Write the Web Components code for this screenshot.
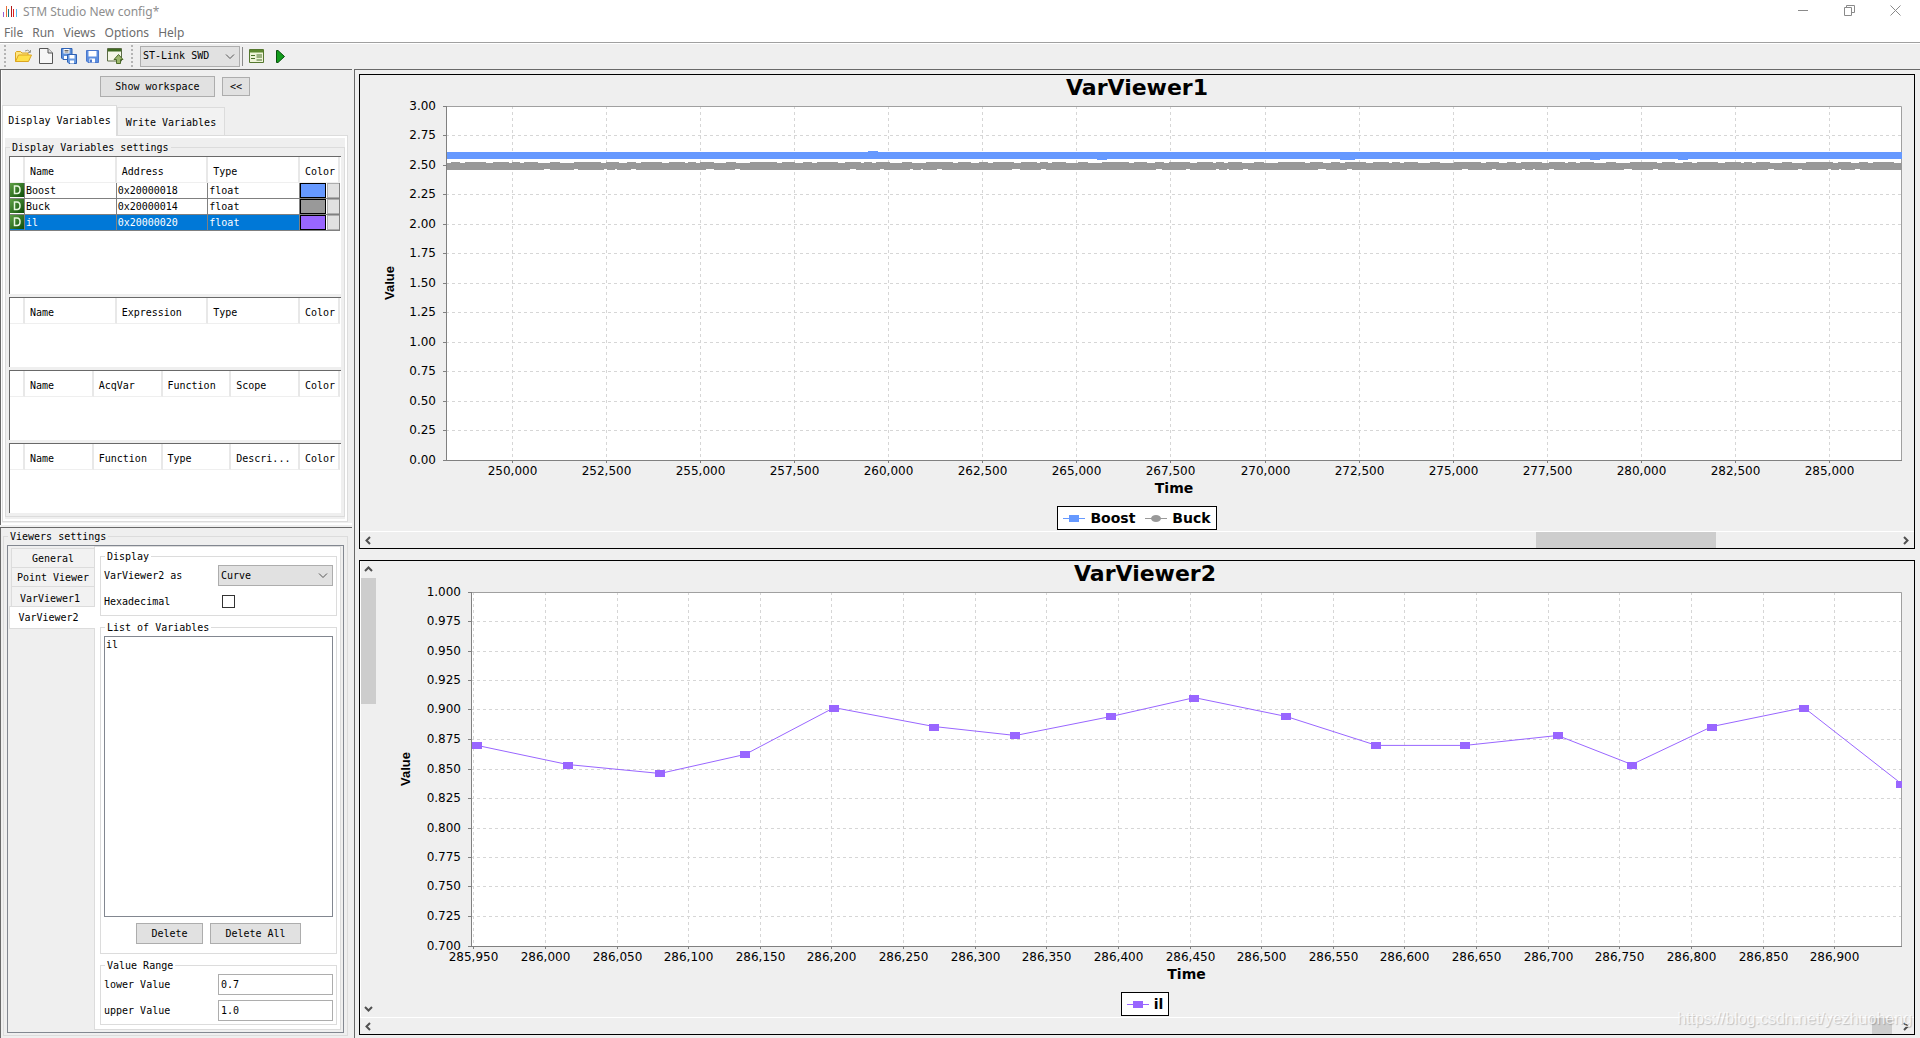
<!DOCTYPE html>
<html lang="en">
<head>
<meta charset="utf-8">
<title>STM Studio New config*</title>
<style>
html,body{margin:0;height:100%}
body{background:#efefef;color:#000;font:10px/14px "DejaVu Sans Mono","Liberation Mono",monospace;overflow:hidden}
</style>
</head>
<body>
<stm-studio></stm-studio>
<script>
const define=(name,html,setup)=>{
  const t=document.createElement('template');
  t.innerHTML='<style>*{box-sizing:border-box}button,input,select,textarea{font:inherit;color:inherit;margin:0;border-radius:0}</style>'+html;
  customElements.define(name,class extends HTMLElement{
    connectedCallback(){
      if(this.shadowRoot)return;
      this.attachShadow({mode:'open'}).append(t.content.cloneNode(true));
      if(setup)setup.call(this,this.shadowRoot);
    }
  });
};

/* ---------- window frame ---------- */
define('stm-titlebar',`
<style>
:host{display:flex;align-items:center;height:23px;background:#fff;color:#8e8e8e;font:12px/16px "Noto Sans",sans-serif;padding:0 2px 0 3px}
.t{flex:1;margin-left:6px}
button{width:46px;height:20px;border:0;background:none;padding:0 0 2px;display:grid;place-items:center}
</style>
<svg width="14" height="13" viewBox="0 0 14 13" aria-hidden="true"><g fill="none" stroke-width="1">
<path d="M.5 7v5" stroke="#9a5fd0"/><path d="M3.500 1v11" stroke="#e8703a"/><path d="M5.500 4v8" stroke="#117a86"/><path d="M8.500 1v11" stroke="#b01818"/><path d="M10.500 4v8" stroke="#e02020"/><path d="M13.500 4v8" stroke="#5ab8ee"/></g></svg>
<span class="t"><slot></slot></span>
<button aria-label="Minimize"><svg width="11" height="11"><path d="M0 5.500h10" stroke="#8a8a8a"/></svg></button>
<button aria-label="Restore"><svg width="11" height="11" fill="none" stroke="#8a8a8a"><path d="M.5 2.500h7v8h-7zM2.500 2.500V.5h8v7h-3"/></svg></button>
<button aria-label="Close"><svg width="11" height="11"><path d="M.5.5l10 10M10.500.5l-10 10" stroke="#8a8a8a"/></svg></button>`);

define('stm-menubar',`
<style>
:host{display:flex;gap:9px;height:19px;background:#fff;color:#6c6c6c;font:12px/19px "Noto Sans",sans-serif;padding-left:4px}
a{color:inherit;text-decoration:none}
</style>
<a href="#file">File</a><a href="#run">Run</a><a href="#views">Views</a><a href="#options">Options</a><a href="#help">Help</a>`);

define('stm-toolbar',`
<style>
:host{display:flex;align-items:center;height:27px;border-top:1px solid #a0a0a0;box-shadow:inset 0 1px #fff;padding:0 0 0 4px}
.grip{width:2px;height:22px;background:repeating-linear-gradient(#b4b4b4 0 2px,#efefef 2px 4px)}
button{border:0;background:none;padding:0;height:20px;display:grid;place-items:center}
.icons{display:flex;gap:7px;margin:0 8px 0 9px}
.icons button{width:16px}
.sep{width:1px;height:19px;background:#8a8a8a;margin:0 6px 0 2px}
stm-select{width:100px;margin-left:7px}
.run{margin-left:12px}
</style>
<span class="grip"></span>
<span class="icons">
<button aria-label="Open"><svg width="17" height="14" viewBox="0 0 17 14"><path d="M.5 12.500V3.500l1-1h4l1.500 1.500h6v2" fill="#ffe680" stroke="#dba520"/><path d="M.5 12.500L3.500 6h13l-3 6.500z" fill="#ffe04a" stroke="#dba520"/><path d="M10 2q3-2 5 .8M15.500 1v2.500H13" fill="none" stroke="#9a9a90"/></svg></button>
<button aria-label="New"><svg width="14" height="16" viewBox="0 0 14 16"><path d="M.5.500h8.500l4.500 4.500v10.500h-13z" fill="#f6f6f6" stroke="#555"/><path d="M9 .5V5h4.500" fill="#ddd" stroke="#555"/></svg></button>
<button aria-label="Save all"><svg width="16" height="16" viewBox="0 0 16 16"><path d="M.5.500h10.500v11H2L.5 10z" fill="#5d8fd8" stroke="#2f62b5"/><path d="M2.500 1h6v4.500h-6zM3 8h5v3H3z" fill="#fff"/><path d="M3.500 2.500h4M3.500 4h4" stroke="#444" stroke-width=".8"/><path d="M6.500 6.500h9v9H8L6.500 14z" fill="#6a9be0" stroke="#2f62b5"/><path d="M8.500 7h5v3.500h-5zM9 12.500h4v3H9z" fill="#fff"/></svg></button>
<button aria-label="Save"><svg width="13" height="13" viewBox="0 0 13 13"><path d="M.5.500h12v12h-10.500L.5 11z" fill="#5d8fe0" stroke="#4a77cc"/><path d="M2.500 1h8v5.500h-8zM3.500 8.500h5.500v4H3.500z" fill="#fff"/><path d="M4 9.500h2v3H4z" fill="#4a77cc"/></svg></button>
<button aria-label="Export"><svg width="17" height="16" viewBox="0 0 17 16"><path d="M.5.500h14v12.500h-14z" fill="#f4f7e6" stroke="#5a6b45"/><path d="M1 1h13v2.500H1z" fill="#3f6b20"/><path d="M11.500 6.500l4.500 5h-2.500v4h-4v-4H7z" fill="#9db86d" stroke="#4c6b2a"/></svg></button>
</span>
<span class="grip"></span>
<stm-select label="Connection" value="ST-Link SWD"></stm-select>
<span class="sep"></span>
<button aria-label="Acquisition settings"><svg width="15" height="14" viewBox="0 0 15 14"><path d="M.5.500h14v13H.5z" fill="#eef3d8" stroke="#55782f"/><path d="M1 1h13v2.500H1z" fill="#5f8a32"/><path d="M2 6.500h4M2 9.500h4M7.500 6h5.500M7.500 8h5.500M7.500 11h5.500" stroke="#48702a"/></svg></button>
<button class="run" aria-label="Run"><svg width="9" height="13" viewBox="0 0 9 13"><path d="M.5.500h1.500l6.500 6-6.500 6H.5z" fill="#129c1c" stroke="#064f0b"/></svg></button>`);

/* ---------- controls ---------- */
define('stm-button',`
<style>
:host{display:block}
button{display:block;width:100%;height:var(--h,21px);border:1px solid #adadad;background:#e1e1e1;padding:1px 0 0;line-height:14px}
</style><button type="button"><slot></slot></button>`);

define('stm-select',`
<style>
:host{display:block;position:relative}
select{display:block;appearance:none;width:100%;height:21px;border:1px solid #adadad;background:#e1e1e1;padding:0 20px 0 2px}
svg{position:absolute;right:5px;top:8px;pointer-events:none}
</style><select id="s"><option></option></select>
<svg width="10" height="6" fill="none" stroke="#555"><path d="M1 .5l4 4 4-4"/></svg>`,
function(r){r.querySelector('select').setAttribute('aria-label',this.getAttribute('label'));r.querySelector('option').textContent=this.getAttribute('value')});

define('stm-field',`
<style>
:host{display:grid;grid-template-columns:1fr 115px;align-items:center;height:21px}
input[type=text]{width:115px;height:21px;border:1px solid #adadad;background:#fff;padding:0 2px;outline:0}
input[type=checkbox]{appearance:none;width:13px;height:13px;border:1px solid #333;background:#fff;margin-left:4px}
stm-select{width:115px}
</style><label for="c"></label>`,
function(r){
  const kind=this.getAttribute('kind'),v=this.getAttribute('value')||'',l=r.querySelector('label');
  l.textContent=this.getAttribute('label');
  let c;
  if(kind==='select'){c=document.createElement('stm-select');c.setAttribute('label',l.textContent);c.setAttribute('value',v)}
  else{c=document.createElement('input');c.type=kind;if(kind==='text')c.value=v}
  c.id='c';r.append(c);
});

define('stm-group',`
<style>
:host{display:flex;flex-direction:column}
fieldset{flex:1;min-width:0;margin:0;border:1px solid #dcdcdc;padding:2px 3px;display:flex;flex-direction:column}
legend{padding:0 2px;margin-left:1px;height:14px;line-height:15px}
</style><fieldset><legend></legend><slot></slot></fieldset>`,
function(r){r.querySelector('legend').textContent=this.getAttribute('label')});

define('stm-table',`
<style>
:host{display:block;background:#fff;border:solid #696969;border-width:1px 0 0 1px}
table{border-collapse:separate;border-spacing:0;table-layout:fixed;width:calc(100% - 1px)}
th{height:26px;padding:4px 0 0 5px;text-align:left;font-weight:400;border-right:2px solid #e8e8e8;border-bottom:1px solid #efefef;white-space:nowrap;overflow:hidden}
td{height:16px;padding:1px 0 0 1px;border:solid #808080;border-width:0 1px 1px 0;line-height:14px}
td:nth-child(1),td:last-child{padding:0}
tr.sel td{background:#0078d7;color:#fff}
svg{display:block}
.c{display:flex;height:15px}
.c i{flex:0 0 26px;border:1px solid #000}
.c button{flex:1;min-width:0;padding:0;border:1px solid #adadad;border-right:0;background:#e1e1e1;margin-left:1px}
tr.sel td:last-child{background:#fff}
</style><table><thead><tr></tr></thead><tbody></tbody></table>`,
function(r){
  const cols=this.getAttribute('cols').split(','),head=r.querySelector('thead tr');
  [''].concat(cols).forEach((c,i)=>{
    const th=document.createElement('th');th.scope='col';th.textContent=c;
    if(i===0)th.style.width='15px';if(i===cols.length)th.style.width='40px';
    head.append(th);
  });
  for(const row of JSON.parse(this.getAttribute('rows')||'[]')){
    const tr=document.createElement('tr');
    if(row.selected)tr.className='sel';
    tr.innerHTML=`<td><svg width="14" height="15" role="img" aria-label="Display"><defs><linearGradient id="g" x2="1" y2="1"><stop stop-color="#5fa045"/><stop offset="1" stop-color="#0c4d08"/></linearGradient></defs><rect width="14" height="14" fill="url(#g)"/><path d="M4.500 3v7.500h2.500q3 0 3-3.750t-3-3.750z" fill="none" stroke="#e8f8e0" stroke-width="1.500"/></svg></td>`+
      row.cells.map(c=>`<td>${c}</td>`).join('')+
      `<td><div class="c"><i style="background:${row.color}"></i><button aria-label="Pick color"></button></div></td>`;
    r.querySelector('tbody').append(tr);
  }
});

define('stm-scrollbar',`
<style>
:host{display:flex;background:#efefef;height:17px;border-top:1px solid #fff}
:host([vertical]){flex-direction:column;width:16px;height:auto;border:0;border-left:1px solid #fff}
button{border:0;background:none;padding:0;flex:0 0 17px;display:grid;place-items:center}
.track{flex:1;display:flex;flex-direction:inherit}
.b{background:#cdcdcd}
</style><button aria-label="Back"><svg width="9" height="9" fill="none" stroke="#505050" stroke-width="2"><path/></svg></button>
<span class="track"><span class="a"></span><span class="b"></span><span class="z"></span></span>
<button aria-label="Forward"><svg width="9" height="9" fill="none" stroke="#505050" stroke-width="2"><path/></svg></button>`,
function(r){
  const v=this.hasAttribute('vertical'),p=r.querySelectorAll('path');
  p[0].setAttribute('d',v?'M1 6l3.500-3.500L8 6':'M6 1L2.500 4.500 6 8');
  p[1].setAttribute('d',v?'M1 3l3.500 3.500L8 3':'M3 1l3.500 3.500L3 8');
  this.getAttribute('parts').split(',').forEach((n,i)=>r.querySelector(['.a','.b','.z'][i]).style.flex=n+' 0 0');
});

/* ---------- chart ---------- */
define('stm-chart',`
<style>
:host{display:flex;flex-direction:column;flex:1;min-height:0;border:1px solid #000;background:#efefef}
.row{flex:1;display:flex;min-height:0}
.main{flex:1;min-width:0;display:flex;flex-direction:column;align-items:center}
h2{margin:0;padding-top:2px;font:700 22px/22px "DejaVu Sans",sans-serif}
.plot{flex:1;min-height:0;width:100%;overflow:hidden}
.plot svg{display:block}
.legend{display:flex;align-items:center;height:24px;border:1px solid #000;background:#fff;padding:0 5px;gap:10px;margin-bottom:1px;font:700 14px/22px "DejaVu Sans",sans-serif}
.legend span{display:flex;align-items:center;gap:5px}
</style>
<div class="row"><slot name="side"></slot><div class="main"><h2></h2><div class="plot"></div><div class="legend"></div></div></div>
<slot name="bottom"></slot>`,
function(r){
  const c=charts[this.getAttribute('series')];
  r.querySelector('h2').textContent=c.title;
  r.querySelector('.legend').innerHTML=c.legend.map(([n,col,round])=>`<span><svg width="22" height="10"><path d="M0 5.500h22" stroke="${col}"/>${round?`<ellipse cx="11" cy="5.500" rx="5" ry="3.500" fill="${col}"/>`:`<path d="M6 2h10v7H6z" fill="${col}"/>`}</svg>${n}</span>`).join('');
  const box=r.querySelector('.plot');
  const draw=()=>{
    const W=box.clientWidth,H=box.clientHeight;
    if(!W||!H)return;
    const L=c.left,R=W-12,T=7,B=H-46,w=R-L,h=B-T;
    const X=v=>L+(v-c.x0)/(c.x1-c.x0)*w,Y=v=>B-(v-c.y0)/(c.y1-c.y0)*h;
    const px=v=>Math.floor(v)+.5;
    let s=`<svg width="${W}" height="${H}" font-family="DejaVu Sans" font-size="12"><rect x="${L}" y="${T}" width="${w}" height="${h}" fill="#fff"/>`;
    let grid='',tick='',text='';
    for(let i=0;i<=12;i++){
      const v=c.y0+(c.y1-c.y0)*i/12,y=px(Y(v));
      if(i)grid+=`M${L} ${y}H${R}`;
      tick+=`M${L-3} ${y}h4`;
      text+=`<text x="${L-10}" y="${y+3.5}" text-anchor="end">${v.toFixed(c.digits)}</text>`;
    }
    for(let v=c.tick0;v<c.x1;v+=c.step){
      const x=px(X(v));
      grid+=`M${x} ${T}V${B}`;tick+=`M${x} ${B}v3`;
      text+=`<text x="${x}" y="${B+15}" text-anchor="middle">${v.toLocaleString('en-US')}</text>`;
    }
    s+=`<path d="${grid}" stroke="#d6d6d6" stroke-dasharray="3 3"/>`;
    s+=`<path d="M${L} ${T+.5}H${R-.5}V${B}" fill="none" stroke="#a0a0a0"/>`;
    s+=`<svg x="${L}" y="${T}" width="${w}" height="${h}" overflow="hidden"><g transform="translate(${-L},${-T})">${c.paint({X,Y,L,R,T,B,w})}</g></svg>`;
    s+=`<path d="M${L+.5} ${T}V${B+.5}H${R}${tick}" fill="none" stroke="#808080"/>`;
    s+=text+`<text x="${L+w/2}" y="${B+33}" text-anchor="middle" font-size="14" font-weight="700">Time</text>`;
    s+=`<text transform="translate(34,${T+h/2}) rotate(-90)" text-anchor="middle" font-family="Liberation Sans" font-size="13" font-weight="700">Value</text></svg>`;
    box.innerHTML=s;
  };
  draw();
  new ResizeObserver(draw).observe(box);
});

const charts={
  one:{title:'VarViewer1',left:86,x0:248240,x1:286920,tick0:250000,step:2500,y0:0,y1:3,digits:2,
    legend:[['Boost','#6699ff'],['Buck','#999999',true]],
    paint({Y,L,R,w}){
      const yb=Math.round(Y(2.608)),yk=Math.round(Y(2.514)),blue='#6699ff',grey='#999999';
      let s=`<path d="M${L} ${yb+3.5}H${R}" stroke="${blue}" stroke-width="7"/>`;
      for(const [f,dy,n] of [[.290,-1,10],[.447,7,10],[.614,7,15],[.786,7,10],[.846,7,10]])
        s+=`<rect x="${Math.round(L+f*w)}" y="${yb+dy}" width="${n}" height="1" fill="${blue}"/>`;
      s+=`<path d="M${L} ${yk+3.5}H${R}" stroke="${grey}" stroke-width="7"/>`;
      s+=`<path d="M${L+5} ${yk-.5}H${R}" stroke="${grey}" stroke-dasharray="9 5 21 7 16 3 8 4 14 12 10 14 27 5 13 8"/>`;
      s+=`<path d="M${L} ${yk+6.5}H${R}" stroke="#fff" stroke-dasharray="0 98 6 24 4 26 3 8 2 14 5 70 8 21 5 12"/>`;
      return s;
    }},
  two:{title:'VarViewer2',left:95,x0:285948,x1:286947,tick0:285950,step:50,y0:.7,y1:1,digits:3,
    legend:[['il','#9966ff']],
    points:[[285952.2,.870],[286015.5,.8538],[286080,.8462],[286139.5,.8624],[286201.5,.902],[286271.2,.886],[286328.1,.8784],[286394.8,.8945],[286453,.9105],[286517.2,.8945],[286580.1,.870],[286642.1,.870],[286706.6,.8784],[286758.4,.8538],[286814.4,.886],[286878.6,.902],[286946.6,.8375]],
    paint({X,Y}){
      const pts=this.points.map(([x,y])=>[X(x),Y(y)]);
      return `<polyline points="${pts.map(p=>p.join()).join(' ')}" fill="none" stroke="#9966ff"/>`+
        pts.map(p=>`<rect x="${Math.round(p[0])-5}" y="${Math.round(p[1])-3}" width="10" height="7" fill="#9966ff"/>`).join('');
    }}
};

/* ---------- left panes ---------- */
define('stm-variables',`
<style>
:host{display:block;border:solid #696969;border-width:1px 0 0 1px;box-shadow:inset 1px 0 #fff,inset 0 -2px #fff;padding:6px 4px 3px 1px}
.top{display:flex;justify-content:center;align-items:center;gap:7px}
.top :first-child{width:115px}.top :last-child{width:28px;--h:19px}
.tabs{display:flex;align-items:flex-end;height:30px;margin-top:8px}
.tabs button{border:1px solid #dcdcdc;border-bottom:0;background:#f2f2f2;height:28px;padding:3px 0 0;width:108px}
.tabs .on{background:#fff;height:31px;width:115px;margin-bottom:-1px;padding:0;position:relative}
.page{border:1px solid #dcdcdc;box-shadow:inset 0 0 0 2px #fff;padding:4px 2px}
.tables{display:flex;flex-direction:column;gap:3px;padding-bottom:1px}
stm-table{min-height:70px}
.tables :first-child{min-height:138px}
</style>
<div class="top"><stm-button>Show workspace</stm-button><stm-button>&lt;&lt;</stm-button></div>
<div class="tabs"><button class="on">Display Variables</button><button>Write Variables</button></div>
<div class="page"><stm-group label="Display Variables settings"><div class="tables">
<stm-table cols="Name,Address,Type,Color" rows='[{"cells":["Boost","0x20000018","float"],"color":"#6699ff"},{"cells":["Buck","0x20000014","float"],"color":"#999999"},{"cells":["il","0x20000020","float"],"color":"#9966ff","selected":true}]'></stm-table>
<stm-table cols="Name,Expression,Type,Color"></stm-table>
<stm-table cols="Name,AcqVar,Function,Scope,Color"></stm-table>
<stm-table cols="Name,Function,Type,Descri...,Color"></stm-table>
</div></stm-group></div>`);

define('stm-viewers',`
<style>
:host{flex:1;min-height:0;display:flex;flex-direction:column;border:solid #696969;border-width:1px 0 0 1px;padding:1px 4px 2px 2px}
.outer{flex:1;min-height:0}
.box{flex:1;min-height:0;display:flex;border:1px solid #828790;padding:0 2px 2px 0}
.tabs{width:86px;display:flex;flex-direction:column;padding:2px 0 0 3px}
.tabs button{height:19px;border:1px solid #dcdcdc;border-width:1px 0 0 1px;background:#f2f2f2;padding:2px 0 0}
.tabs button:nth-child(3){height:20px;padding:5px 6px 0 0}
.tabs .on{height:23px;margin:0 -1px 0 -2px;background:#fff;border-width:1px 0 1px 1px;padding:1px 8px 0 0;position:relative}
.page{flex:1;min-width:0;display:flex;flex-direction:column;gap:4px;background:#fff;border:1px solid #dcdcdc;padding:2px 3px 4px 5px}
.rows{display:flex;flex-direction:column;gap:5px;padding-bottom:1px}
.grow{flex:1;min-height:0}
select.list{flex:1;min-height:0;border:1px solid #828790;padding:2px 1px;background:#fff;overflow:hidden;outline:0}
.list option{padding:0;min-height:14px;line-height:14px}
.btns{display:flex;justify-content:center;gap:7px;padding:6px 0 7px}
.btns :first-child{width:67px}.btns :last-child{width:91px}
</style>
<stm-group class="outer" label="Viewers settings"><div class="box">
<div class="tabs"><button>General</button><button>Point Viewer</button><button>VarViewer1</button><button class="on">VarViewer2</button></div>
<div class="page">
<stm-group label="Display"><div class="rows"><stm-field kind="select" label="VarViewer2 as" value="Curve"></stm-field><stm-field kind="checkbox" label="Hexadecimal"></stm-field></div></stm-group>
<stm-group class="grow" label="List of Variables"><select class="list" size="2" aria-label="List of Variables"><option>il</option></select><div class="btns"><stm-button>Delete</stm-button><stm-button>Delete All</stm-button></div></stm-group>
<stm-group label="Value Range"><div class="rows"><stm-field kind="text" label="lower Value" value="0.7"></stm-field><stm-field kind="text" label="upper Value" value="1.0"></stm-field></div></stm-group>
</div></div></stm-group>`);

define('stm-studio',`
<style>
:host{display:flex;flex-direction:column;height:100vh;position:relative}
.body{flex:1;min-height:0;display:flex;gap:2px}
.left{flex:0 0 352px;display:flex;flex-direction:column;gap:2px}
.right{flex:1;min-width:0;display:flex;flex-direction:column;gap:11px;border:solid #696969;border-width:1px 0 0 1px;padding:4px 5px 3px 4px}
.mark{position:absolute;right:8px;bottom:9px;font:16px/20px "Liberation Sans",sans-serif;color:rgba(255,255,255,.75);text-shadow:1px 1px 1px rgba(0,0,0,.2);pointer-events:none}
</style>
<stm-titlebar>STM Studio New config*</stm-titlebar>
<stm-menubar></stm-menubar>
<stm-toolbar></stm-toolbar>
<div class="body">
<div class="left"><stm-variables></stm-variables><stm-viewers></stm-viewers></div>
<div class="right">
<stm-chart series="one"><stm-scrollbar slot="bottom" parts="1159,180,181"></stm-scrollbar></stm-chart>
<stm-chart series="two"><stm-scrollbar slot="side" vertical parts="0,126,296"></stm-scrollbar><stm-scrollbar slot="bottom" parts="1495,20,5"></stm-scrollbar></stm-chart>
</div></div>
<div class="mark">https://blog.csdn.net/yezhuoheng</div>`);
</script>
</body>
</html>
